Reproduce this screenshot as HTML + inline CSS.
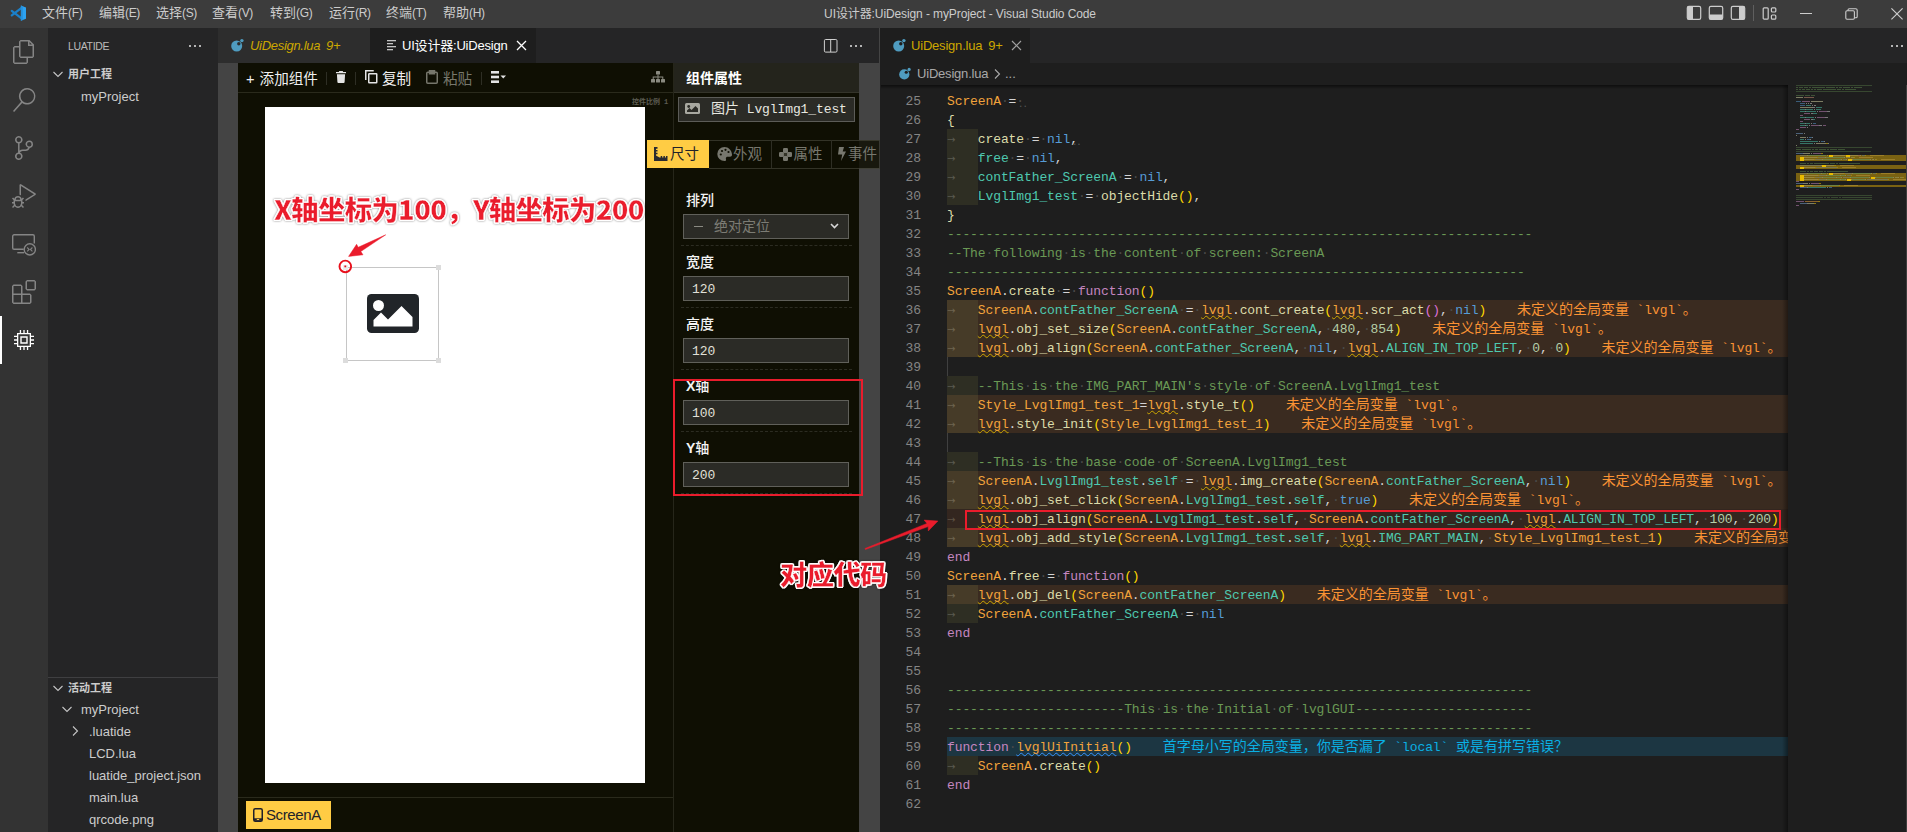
<!DOCTYPE html><html lang="zh"><head><meta charset="utf-8"><title>UI设计器:UiDesign - myProject - Visual Studio Code</title><style>
*{box-sizing:border-box;margin:0;padding:0}
html,body{width:1907px;height:832px;overflow:hidden;background:#1e1e1e}
body{font-family:"Liberation Sans","Noto Sans CJK SC",sans-serif;font-size:13px;color:#cccccc;position:relative}
.abs{position:absolute}
#title{position:absolute;left:0;top:0;width:1907px;height:28px;background:#3c3c3c}
#title .menu{position:absolute;top:-1px;height:28px;line-height:28px;font-size:13px;color:#cccccc;white-space:nowrap}
#title .ttl{position:absolute;left:0;width:1920px;top:0;height:28px;line-height:27px;text-align:center;font-size:12.5px;color:#cccccc}
#act{position:absolute;left:0;top:28px;width:48px;height:804px;background:#333333}
#act svg{position:absolute;left:12px;width:24px;height:24px;fill:#858585}
#side{position:absolute;left:48px;top:28px;width:170px;height:804px;background:#252526}
#side .t{position:absolute;white-space:nowrap;color:#cccccc;font-size:13px;line-height:22px;height:22px}
#side .h{position:absolute;white-space:nowrap;color:#cccccc;font-size:11px;font-weight:bold;line-height:22px;height:22px}
#side svg{position:absolute;width:16px;height:16px;fill:none;stroke:#c5c5c5;stroke-width:1.1}
#g1tabs{position:absolute;left:218px;top:28px;width:662px;height:35px;background:#252526}
#g2tabs{position:absolute;left:881px;top:28px;width:1026px;height:35px;background:#252526}
.tab{position:absolute;top:0;height:35px;line-height:35px;font-size:13px;white-space:nowrap}
#crumb{position:absolute;left:881px;top:63px;width:1026px;height:22px;background:#1e1e1e;line-height:22px;font-size:13px;color:#a9a9a9}
#ed{position:absolute;left:881px;top:85px;width:1026px;height:747px;background:#1e1e1e;overflow:hidden}
#edin{position:absolute;left:-881px;top:-85px;width:1907px;height:832px;font-family:"Liberation Mono","Noto Sans CJK SC",monospace;font-size:13px;letter-spacing:-0.1px}
.num{position:absolute;left:881px;width:40px;text-align:right;height:19px;line-height:21px;color:#858585}

.cl{position:absolute;height:19px;line-height:21px;white-space:pre;color:#d4d4d4}
.cl span,.cl i{display:inline-block;height:19px;vertical-align:top}
.cl i.sp{font-style:normal;color:#4b4b4b;width:7.7px}
.cl i.tr{font-style:normal;color:#5a5a5a;font-size:9px;letter-spacing:-1px;position:relative;top:4px;left:-6px}
.wbg{position:absolute;left:947px;width:841px;height:19px;background:#3a2b20}
.wbg.w47{background:#33261f}
.hbg{position:absolute;left:947px;width:841px;height:19px;background:#1c3642}
.ind{position:absolute;left:947px;width:31px;height:19px;background:#2e2e23;line-height:19px;color:#5a5a50}
.ind.indw{background:#463b28;color:#6e6450}
.ind.ind47{background:#33261f;color:#5e5244}
.ind .arr{position:absolute;left:0px;top:1px;font-family:"DejaVu Sans",sans-serif;font-size:10px;letter-spacing:0}
.guide{position:absolute;left:947px;width:1px;height:19px;background:#404040}
.wmsg{color:#fb9334;margin-left:30.8px}
.wmsg b,.hmsg b{font-weight:normal;font-size:14px;letter-spacing:0;display:inline-block;height:19px;vertical-align:top}
.hmsg{color:#0ab0e4;margin-left:30.8px}
.g{color:#f2a33c}.f{color:#dcdcaa}.p{color:#4ec9b0}.k{color:#c586c0}.c{color:#569cd6}.n{color:#b5cea8}.m{color:#6a9955}.o{color:#d4d4d4}.y{color:#ffd700}.r{color:#da70d6}
.sq{text-decoration:underline wavy #cca700;text-decoration-thickness:1px;text-underline-offset:1px;text-decoration-skip-ink:none}
.sqb{text-decoration:underline wavy #3794ff;text-decoration-thickness:1px;text-underline-offset:1px;text-decoration-skip-ink:none}
.tb{position:absolute;top:0;height:29px;line-height:32px;font-size:14.600px;font-weight:400;color:#f0f0f0;white-space:nowrap}
.vsep{margin-left:1px;top:9px;width:1px;height:13px;background:#2e2e24}
.hd{width:5px;height:5px;background:#dcdcdc}
.ptab{position:absolute;top:77px;height:28px;line-height:29px;font-size:14.500px;color:#77776e;white-space:nowrap}
.plab{position:absolute;left:468px;margin-top:-1.500px;height:22px;line-height:22px;font-size:14px;font-weight:500;color:#f4f4f4;white-space:nowrap}
.pinp{position:absolute;left:465px;width:166px;height:25px;background:#2b2b26;border:1px solid #60605a}
.pval{position:absolute;left:474px;margin-top:2px;height:24px;line-height:24px;font-size:13px;letter-spacing:-.1px;color:#e0e0d8;font-family:"Liberation Mono",monospace}
.psep{position:absolute;left:463px;width:171px;height:0;border-top:1px dashed #2c2c22}
.ann{position:absolute;white-space:nowrap;font-family:"Noto Sans CJK SC","Liberation Sans",sans-serif;font-weight:900;color:#ea1c2c;-webkit-text-stroke:.4px #ffffff;text-shadow:1.300px 0 #fff,-1.300px 0 #fff,0 1.300px #fff,0 -1.300px #fff,.95px .95px #fff,-.95px .95px #fff,.95px -.95px #fff,-.95px -.95px #fff;filter:drop-shadow(0 0 1.200px rgba(0,0,0,.45))}

.mp{font-size:12px;letter-spacing:-.35px}
#side .t{margin-top:1px}
.dots{position:absolute;width:14px;height:2px}.dots i{position:absolute;top:0;width:2px;height:2px;background:#b4b4b4}.dots i:nth-child(1){left:0}.dots i:nth-child(2){left:5px}.dots i:nth-child(3){left:10px}
</style></head><body>
<div id="title">
 <svg class="abs" style="left:10.300px;top:4.600px;width:16px;height:16.300px" viewBox="0 0 100 100"><path d="M72 17L11 64M72 83L11 36" stroke="#1b80c9" stroke-width="14" stroke-linecap="round" fill="none"/><path d="M68 2l32 13v70L68 98z" fill="#2da2f1"/><path d="M68 2l12 5v86l-12 5z" fill="#2591dd"/></svg>
 <div class="menu" style="left:42px">文件<span class="mp">(F)</span></div>
 <div class="menu" style="left:99px">编辑<span class="mp">(E)</span></div>
 <div class="menu" style="left:156px">选择<span class="mp">(S)</span></div>
 <div class="menu" style="left:212px">查看<span class="mp">(V)</span></div>
 <div class="menu" style="left:270px">转到<span class="mp">(G)</span></div>
 <div class="menu" style="left:329px">运行<span class="mp">(R)</span></div>
 <div class="menu" style="left:386px">终端<span class="mp">(T)</span></div>
 <div class="menu" style="left:443px">帮助<span class="mp">(H)</span></div>
 <div class="ttl" style="font-size:12px;letter-spacing:-.1px;line-height:29px">UI设计器:UiDesign - myProject - Visual Studio Code</div>
 <!-- layout controls -->
 <svg class="abs" style="left:1686px;top:5px;width:16px;height:16px" viewBox="0 0 16 16"><rect x="1.300" y="1.400" width="13.400" height="13" rx="1.600" fill="none" stroke="#cccccc" stroke-width="1.200"/><path d="M1.300 2.500a1.200 1.200 0 0 1 1.200-1.200H7v13.200H2.500a1.200 1.200 0 0 1-1.200-1.200z" fill="#cccccc"/></svg>
 <svg class="abs" style="left:1708px;top:5px;width:16px;height:16px" viewBox="0 0 16 16"><rect x="1.300" y="1.400" width="13.400" height="13" rx="1.600" fill="none" stroke="#cccccc" stroke-width="1.200"/><path d="M1.300 9.500h13.400v3.800a1.200 1.200 0 0 1-1.200 1.200H2.500a1.200 1.200 0 0 1-1.200-1.200z" fill="#cccccc"/></svg>
 <svg class="abs" style="left:1730px;top:5px;width:16px;height:16px" viewBox="0 0 16 16"><rect x="1.300" y="1.400" width="13.400" height="13" rx="1.600" fill="none" stroke="#cccccc" stroke-width="1.200"/><path d="M9 1.300h4.500a1.200 1.200 0 0 1 1.200 1.200v10.800a1.200 1.200 0 0 1-1.200 1.200H9z" fill="#cccccc"/></svg>
 <div class="abs" style="left:1753px;top:5px;width:1px;height:16px;background:#5f5f5f"></div>
 <svg class="abs" style="left:1762px;top:6px;width:15px;height:15px" viewBox="0 0 15 15" fill="none" stroke="#cccccc" stroke-width="1.200"><rect x="1.200" y="1.800" width="5" height="11.400" rx="1"/><rect x="9.400" y="1.800" width="4.400" height="4.200" rx="1"/><rect x="9.400" y="9" width="4.400" height="4.200" rx="1"/></svg>
 <div class="abs" style="left:1799.500px;top:12.800px;width:12px;height:1.100px;background:#cccccc"></div>
 <svg class="abs" style="left:1845px;top:7.500px;width:13px;height:12px" viewBox="0 0 13 12" fill="none" stroke="#cccccc" stroke-width="1.100"><rect x=".8" y="2.800" width="8.600" height="8.400" rx="1.200"/><path d="M3 2.800V2a1.300 1.300 0 0 1 1.300-1.300h6.400A1.500 1.500 0 0 1 12.200 2.200v6.200a1.300 1.300 0 0 1-1.300 1.300h-1.300"/></svg>
 <svg class="abs" style="left:1891px;top:7.500px;width:12px;height:12px" viewBox="0 0 12 12" fill="none" stroke="#cccccc" stroke-width="1.200"><path d="M.4 .4l11.200 11M11.600 .4L.4 11.400"/></svg>
</div>

<div id="act">
 <svg style="top:12px" viewBox="0 0 24 24"><path d="M17.5 0h-9L7 1.5V6H2.5L1 7.5v15.07L2.5 24h12.07L16 22.57V18h4.7l1.3-1.43V4.5L17.5 0zm0 2.12l2.38 2.38H17.5V2.12zm-3 20.38h-12v-15H7v9.07L8.5 18h6v4.5zm6-6h-12v-15H16V6h4.5v10.5z"/></svg>
 <svg style="top:60px" viewBox="0 0 24 24"><path d="M15.25 0a8.25 8.25 0 0 0-6.18 13.72L1 22.88l1.12 1.12 8.05-9.12A8.251 8.251 0 1 0 15.25.01V0zm0 15a6.75 6.75 0 1 1 0-13.5 6.75 6.75 0 0 1 0 13.5z"/></svg>
 <svg style="top:108px" viewBox="0 0 24 24"><path d="M21.007 8.222A3.738 3.738 0 0 0 15.045 5.2a3.737 3.737 0 0 0 1.156 6.583 2.988 2.988 0 0 1-2.668 1.67h-2.99a4.456 4.456 0 0 0-2.989 1.165V7.4a3.737 3.737 0 1 0-1.494 0v9.117a3.776 3.776 0 1 0 1.816.099 2.99 2.99 0 0 1 2.668-1.667h2.99a4.484 4.484 0 0 0 4.223-3.039 3.736 3.736 0 0 0 3.25-3.687zM4.565 3.738a2.242 2.242 0 1 1 4.484 0 2.242 2.242 0 0 1-4.484 0zm4.484 16.441a2.242 2.242 0 1 1-4.484 0 2.242 2.242 0 0 1 4.484 0zm8.221-9.715a2.242 2.242 0 1 1 0-4.485 2.242 2.242 0 0 1 0 4.485z"/></svg>
 <svg style="top:156px" viewBox="0 0 24 24"><path d="M10.94 13.5l-1.32 1.32a3.73 3.73 0 0 0-7.24 0L1.06 13.5 0 14.56l1.72 1.72-.22.22V18H0v1.5h1.5v.08c.077.489.214.966.41 1.42L0 22.94 1.06 24l1.65-1.65A4.308 4.308 0 0 0 6 24a4.31 4.31 0 0 0 3.29-1.65L10.94 24 12 22.94 10.09 21c.198-.464.336-.951.41-1.45v-.1H12V18h-1.5v-1.5l-.22-.22L12 14.56l-1.06-1.06zM6 13.5a2.25 2.25 0 0 1 2.25 2.25h-4.5A2.25 2.25 0 0 1 6 13.5zm3 6a3.33 3.33 0 0 1-3 3 3.33 3.33 0 0 1-3-3v-2.25h6v2.25zm14.76-9.9v1.26L13.5 17.37V15.6l8.5-5.37L9 2v9.46a5.07 5.07 0 0 0-1.5-.72V.63L8.64 0l15.12 9.6z"/></svg>
 <svg style="top:204px;fill:none;stroke:#858585;stroke-width:1.400" viewBox="0 0 24 24"><path d="M22.300 11.500V4.200a1.400 1.400 0 0 0-1.400-1.400H2.100A1.400 1.400 0 0 0 .7 4.200v11.700a1.400 1.400 0 0 0 1.400 1.400h9.600"/><path d="M5.300 20.700h6.700"/><circle cx="17.800" cy="17.400" r="5.600"/><path d="M15.200 15.500l1.900 1.900-1.900 1.900M20.400 15.500l-1.900 1.900 1.900 1.900" stroke-width="1.100"/></svg>
 <svg style="top:252px" viewBox="0 0 24 24"><path d="M13.5 1.5L15 0h7.5L24 1.500V9l-1.500 1.500H15L13.500 9V1.500zm1.500 0V9h7.500V1.500H15zM0 15V6l1.500-1.500H9L10.500 6v7.500H18l1.500 1.500v7.500L18 24H1.500L0 22.500V15zm9-1.500V6H1.500v7.500H9zM9 15H1.500v7.500H9V15zm1.500 7.500H18V15h-7.500v7.500z"/></svg>
 <div class="abs" style="left:0;top:288px;width:2px;height:48px;background:#ffffff"></div>
 <svg style="left:14px;top:302px;width:20px;height:20px;fill:#ffffff" viewBox="0 0 20 20"><path fill-rule="evenodd" d="M3 3h14v14H3zM4.300 4.300v11.400h11.400V4.300zM6.300 6.300h7.400v7.400H6.300zM7.700 7.700v4.600h4.600V7.700z"/><path d="M5.800 0h1.300v3H5.800zM9.350 0h1.300v3h-1.300zM12.900 0h1.300v3h-1.300zM5.800 17h1.300v3H5.800zM9.350 17h1.300v3h-1.300zM12.900 17h1.300v3h-1.300zM0 5.800h3v1.300H0zM0 9.350h3v1.300H0zM0 12.900h3v1.300H0zM17 5.800h3v1.300h-3zM17 9.350h3v1.300h-3zM17 12.900h3v1.300h-3z"/></svg>
</div>

<div id="side">
 <div class="abs" style="left:20px;top:7px;font-size:10.500px;line-height:22px;color:#bbbbbb;letter-spacing:-.35px">LUATIDE</div>
 <div class="dots" style="left:141px;top:17px"><i></i><i></i><i></i></div>
 <svg style="left:2px;top:38px" viewBox="0 0 16 16"><path d="M3.500 6l4.500 4.500 4.500-4.500"/></svg>
 <div class="h" style="left:20px;top:35px">用户工程</div>
 <div class="t" style="left:33px;top:57px">myProject</div>
 <div class="abs" style="left:0;top:649px;width:170px;height:1px;background:#3f3f41"></div>
 <svg style="left:2px;top:652px" viewBox="0 0 16 16"><path d="M3.500 6l4.500 4.500 4.500-4.500"/></svg>
 <div class="h" style="left:20px;top:649px">活动工程</div>
 <svg style="left:11px;top:673px" viewBox="0 0 16 16"><path d="M3.500 6l4.500 4.500 4.500-4.500"/></svg>
 <div class="t" style="left:33px;top:670px">myProject</div>
 <svg style="left:19px;top:695px" viewBox="0 0 16 16"><path d="M6 3.500l4.500 4.500-4.500 4.500"/></svg>
 <div class="t" style="left:41px;top:692px">.luatide</div>
 <div class="t" style="left:41px;top:714px">LCD.lua</div>
 <div class="t" style="left:41px;top:736px">luatide_project.json</div>
 <div class="t" style="left:41px;top:758px">main.lua</div>
 <div class="t" style="left:41px;top:780px">qrcode.png</div>
</div>

<div id="g1tabs">
 <div class="tab" style="left:0;width:152px;background:#2d2d2d"></div>
 <svg class="abs" style="left:13.2px;top:9.6px;width:14px;height:14px" viewBox="0 0 14 14"><circle cx="5.700" cy="8" r="5.500" fill="#4f9cc0"/><circle cx="10.900" cy="2.600" r="1.700" fill="#4f9cc0"/><circle cx="7.800" cy="5.700" r="1.700" fill="#2d2d2d"/></svg>
 <div class="tab" style="left:32px;color:#cca700;font-style:italic;letter-spacing:-.3px">UiDesign.lua<span style="margin-left:6px;font-size:13px">9+</span></div>
 <div class="tab" style="left:152px;width:166px;background:#1e1e1e"></div>
 <svg class="abs" style="left:169px;top:11px;width:12px;height:12px" viewBox="0 0 12 12" fill="#c5c5c5"><rect x="0" y="1" width="9" height="1.300"/><rect x="0" y="4" width="6" height="1.300"/><rect x="0" y="7" width="9" height="1.300"/><rect x="0" y="10" width="6" height="1.300"/></svg>
 <div class="tab" style="left:184px;color:#ffffff;letter-spacing:-.2px">UI设计器:UiDesign</div>
 <svg class="abs" style="left:298px;top:12px;width:11px;height:11px" viewBox="0 0 11 11" fill="none" stroke="#ffffff" stroke-width="1.300"><path d="M1 1l9 9M10 1l-9 9"/></svg>
 <svg class="abs" style="left:605px;top:10px;width:16px;height:16px" viewBox="0 0 16 16" fill="none" stroke="#d0d0d0"><rect x="1.400" y="1.500" width="12.600" height="12.600" rx="1.200"/><path d="M7.700 1.500v12.600"/></svg>
 <div class="dots" style="left:632px;top:17px"><i></i><i></i><i></i></div>
</div>
<div class="abs" style="left:879px;top:28px;width:1px;height:804px;background:#444444"></div><div class="abs" style="left:880px;top:28px;width:1px;height:804px;background:#1e1e1e"></div>
<div id="g2tabs">
 <div class="tab" style="left:0;width:149px;background:#1e1e1e"></div>
 <svg class="abs" style="left:11.7px;top:9.6px;width:14px;height:14px" viewBox="0 0 14 14"><circle cx="5.700" cy="8" r="5.500" fill="#4f9cc0"/><circle cx="10.900" cy="2.600" r="1.700" fill="#4f9cc0"/><circle cx="7.800" cy="5.700" r="1.700" fill="#1e1e1e"/></svg>
 <div class="tab" style="left:30px;color:#cca700;letter-spacing:-.2px">UiDesign.lua<span style="margin-left:6px">9+</span></div>
 <svg class="abs" style="left:130px;top:12px;width:11px;height:11px" viewBox="0 0 11 11" fill="none" stroke="#a0a0a0" stroke-width="1.200"><path d="M1 1l9 9M10 1l-9 9"/></svg>
 <div class="dots" style="left:1010px;top:17px"><i></i><i></i><i></i></div>
</div>
<div id="crumb">
 <svg class="abs" style="left:17.6px;top:4.0px;width:13px;height:13px" viewBox="0 0 14 14"><circle cx="5.700" cy="8" r="5.500" fill="#4f9cc0"/><circle cx="10.900" cy="2.600" r="1.700" fill="#4f9cc0"/><circle cx="7.800" cy="5.700" r="1.700" fill="#1e1e1e"/></svg>
 <div class="abs" style="left:36px;top:0;letter-spacing:-.2px">UiDesign.lua</div>
 <svg class="abs" style="left:108px;top:3px;width:16px;height:16px" viewBox="0 0 16 16" fill="none" stroke="#a9a9a9" stroke-width="1.100"><path d="M6 3.500l4.500 4.500-4.500 4.500"/></svg>
 <div class="abs" style="left:124px;top:0">...</div>
</div>

<div id="dz" class="abs" style="left:218px;top:63px;width:662px;height:769px;background:#444444;overflow:hidden">
 <div class="abs" style="left:20px;top:0;width:621px;height:769px;background:#0f0f03"></div>
 <!-- toolbar -->
 <div class="abs" style="left:20px;top:29px;width:436px;height:1px;background:#2a2a1c"></div>
 <div class="tb" style="left:28px">+<span style="margin-left:1px"> 添加组件</span></div>
 <div class="abs vsep" style="left:107px"></div>
 <svg class="abs" style="left:118px;top:8px;width:10px;height:12px" viewBox="0 0 10 12" fill="#e4e4e4"><path d="M3.300 0h3.400l.5 1H10v1.300H0V1h2.800zM.9 3.200h8.200L8.600 11a1 1 0 0 1-1 1H2.400a1 1 0 0 1-1-1z"/></svg>
 <div class="abs vsep" style="left:136px"></div>
 <svg class="abs" style="left:147px;top:7px;width:13px;height:14px" viewBox="0 0 13 14" fill="none" stroke="#e4e4e4" stroke-width="1.500"><rect x="3.750" y="3.750" width="8" height="9" rx=".5"/><path d="M.75 10V.75h8"/></svg>
 <div class="tb" style="left:164px">复制</div>
 <svg class="abs" style="left:208px;top:7px;width:12px;height:14px" viewBox="0 0 12 14" fill="none" stroke="#77776c" stroke-width="1.500"><rect x=".75" y="2.250" width="10.500" height="11" rx="1"/><rect x="3.500" y=".75" width="5" height="3" fill="#77776c"/></svg>
 <div class="tb" style="left:225px;color:#77776c">粘贴</div>
 <div class="abs vsep" style="left:262px"></div>
 <svg class="abs" style="left:273px;top:8px;width:16px;height:12px" viewBox="0 0 16 12" fill="#e4e4e4"><rect x="0" y="0" width="8" height="2.600"/><rect x="0" y="4.700" width="8" height="2.600"/><rect x="0" y="9.400" width="8" height="2.600"/><path d="M9.500 4.500h5.500l-2.750 3z"/></svg>
 <svg class="abs" style="left:433px;top:8px;width:14px;height:12px" viewBox="0 0 14 12" fill="#8a8a80"><rect x="5" y="0" width="4" height="3.500" rx=".5"/><rect x="0" y="8" width="4" height="3.500" rx=".5"/><rect x="5" y="8" width="4" height="3.500" rx=".5"/><rect x="10" y="8" width="4" height="3.500" rx=".5"/><path d="M6.500 3.500h1v2h4.800v2.500h-1V6.500H7.500V8h-1V6.500H2.700V8h-1V5.500h4.800z"/></svg>
 <div class="abs" style="left:414px;top:33px;font-size:7px;line-height:11px;color:#5c5c52;white-space:nowrap;font-weight:bold">控件比例<span style="font-family:'Liberation Mono',monospace;margin-left:4px">1</span></div>
 <!-- canvas -->
 <div class="abs" style="left:47px;top:44px;width:380px;height:676px;background:#ffffff"></div>
 <!-- widget -->
 <div class="abs" style="left:128px;top:204px;width:93px;height:94px;border:1px solid #c6c6c6"></div>
 <div class="abs hd" style="left:125px;top:202px;background:#ececec"></div><div class="abs hd" style="left:218px;top:202px"></div>
 <div class="abs hd" style="left:125px;top:295px"></div><div class="abs hd" style="left:218px;top:295px"></div>
 <svg class="abs" style="left:149px;top:231px;width:52px;height:39px" viewBox="0 0 52 39"><rect width="52" height="39" rx="4.500" fill="#212529"/><circle cx="11.500" cy="11.500" r="5.500" fill="#fff"/><path d="M6.500 32.500v-6.500l7.500-7.500 7 7 13.500-13.500 11 11v9.500z" fill="#fff"/></svg>
 <!-- separator bottom -->
 <div class="abs" style="left:20px;top:734px;width:436px;height:1px;background:#2a2a1c"></div>
 <div class="abs" style="left:28px;top:738px;width:85px;height:28px;background:#ffcc44"></div>
 <svg class="abs" style="left:35px;top:745px;width:10px;height:14px" viewBox="0 0 10 14"><rect x=".75" y=".75" width="8.500" height="12.500" rx="1.500" fill="none" stroke="#20202a" stroke-width="1.500"/><rect x="1" y="10.300" width="8" height="2.500" fill="#20202a"/><rect x="3.800" y="11" width="2.400" height="1" fill="#ffcc44"/></svg>
 <div class="abs" style="left:48px;top:738px;height:28px;line-height:27px;font-size:15px;letter-spacing:-.4px;color:#22222a">ScreenA</div>
 <!-- divider between canvas & props -->
 <div class="abs" style="left:455px;top:0;width:1px;height:769px;background:#26261a"></div>
 <!-- properties panel -->
 <div class="abs" style="left:456px;top:0;width:185px;height:29px;background:#24241c"></div>
 <div class="abs" style="left:456px;top:29px;width:185px;height:1px;background:#34342a"></div>
 <div class="abs" style="left:468px;top:0;height:30px;line-height:30px;font-size:14px;font-weight:bold;color:#ffffff">组件属性</div>
 <div class="abs" style="left:460px;top:34px;width:177px;height:25px;background:#2b2b26;border:1px solid #5c5c58"></div>
 <svg class="abs" style="left:467px;top:40px;width:15px;height:11px" viewBox="0 0 15 11"><rect width="15" height="11" rx="1.500" fill="#a8a8a0"/><circle cx="3.700" cy="3.500" r="1.400" fill="#2b2b26"/><path d="M2 9v-1.500l2.500-2.500 2 2 4-4 2.500 2.500v3.500z" fill="#2b2b26"/></svg>
 <div class="abs" style="left:493px;top:34px;height:25px;line-height:25px;font-size:13px;color:#e8e8e0;font-family:'Liberation Mono','Noto Sans CJK SC',monospace;white-space:nowrap;letter-spacing:-.1px"><span style="font-size:14px;letter-spacing:0">图片</span> LvglImg1_test</div>
 <!-- tabs -->
 <div class="abs" style="left:429px;top:77px;width:62px;height:28px;background:#ffcc44"></div>
 <div class="abs" style="left:491px;top:77px;width:171px;height:28px;background:rgba(15,15,3,.82)"></div>
 <div class="abs" style="left:491px;top:77px;width:171px;height:1px;background:rgba(64,64,52,.75)"></div><div class="abs" style="left:491px;top:105px;width:171px;height:1px;background:rgba(64,64,52,.75)"></div>
 <div class="abs" style="left:553px;top:77px;width:1px;height:28px;background:#2e2e24"></div>
 <div class="abs" style="left:613px;top:77px;width:1px;height:28px;background:#2e2e24"></div>
 <div class="abs" style="left:661px;top:77px;width:1px;height:28px;background:#3a3a34"></div>
 <svg class="abs" style="left:436px;top:84px;width:14px;height:14px" viewBox="0 0 14 14" fill="#2a2a30"><path d="M0 0h3.500v1.800h-1.500v1.200h1.500v1.500h-1.500v1.200h1.500v1.500h-1.500v1.300l3.500 2h1.200v-1.500h1.500v1.500h1.200v-1.500h1.500v1.500h1.100v-1.500h1.500v5H0z"/></svg>
 <div class="ptab" style="left:452px;color:#22222a">尺寸</div>
 <svg class="abs" style="left:499px;top:84px;width:15px;height:14px" viewBox="0 0 15 14"><path d="M7.500 0a7.200 7 0 1 0 0 14c1.300 0 1.800-.9 1.500-1.800-.5-1.400.3-2.500 1.700-2.500h2.300a2 2 0 0 0 2-2.200c-.2-4.200-3.600-7.500-7.500-7.500z" fill="#77776e"/><circle cx="3.800" cy="7.500" r="1.100" fill="#0f0f03"/><circle cx="5" cy="4" r="1.100" fill="#0f0f03"/><circle cx="8.500" cy="2.800" r="1.100" fill="#0f0f03"/><circle cx="11.500" cy="5" r="1.100" fill="#0f0f03"/></svg>
 <div class="ptab" style="left:515px">外观</div>
 <svg class="abs" style="left:561px;top:85px;width:13px;height:13px" viewBox="0 0 13 13" fill="#77776e"><rect x="4" y="0" width="5" height="4.900" rx="1.200"/><rect x="4" y="8.100" width="5" height="4.900" rx="1.200"/><rect x="0" y="4" width="4.900" height="5" rx="1.200"/><rect x="8.100" y="4" width="4.900" height="5" rx="1.200"/><path d="M4 4h5v5H4z" opacity=".35"/></svg>
 <div class="ptab" style="left:575.500px">属性</div>
 <svg class="abs" style="left:620px;top:84px;width:8px;height:14px" viewBox="0 0 8 14" fill="#77776e"><path d="M1 0h5l-1.300 4.500h3.300l-5 9.500 1.200-6.500H0z"/></svg>
 <div class="ptab" style="left:630px">事件</div>
 <!-- fields -->
 <div class="plab" style="top:127px">排列</div>
 <div class="pinp" style="top:151px"></div>
 <div class="abs" style="left:476px;top:163px;width:9px;height:1px;background:#8a8a82"></div><div class="abs" style="left:496px;top:151px;height:24px;line-height:25px;font-size:14px;color:#7c7c74;white-space:nowrap">绝对定位</div>
 <svg class="abs" style="left:612px;top:160px;width:9px;height:6px" viewBox="0 0 9 6" fill="none" stroke="#d8d8d8" stroke-width="1.600"><path d="M1 1l3.500 3.500L8 1"/></svg>
 <div class="psep" style="top:182px"></div>
 <div class="plab" style="top:189px">宽度</div>
 <div class="pinp" style="top:213px"></div><div class="pval" style="top:213px">120</div>
 <div class="psep" style="top:244px"></div>
 <div class="plab" style="top:251px">高度</div>
 <div class="pinp" style="top:275px"></div><div class="pval" style="top:275px">120</div>
 <div class="psep" style="top:306px"></div>
 <div class="plab" style="top:313px"><b>X</b>轴</div>
 <div class="pinp" style="top:337px"></div><div class="pval" style="top:337px">100</div>
 <div class="psep" style="top:368px"></div>
 <div class="plab" style="top:375px"><b>Y</b>轴</div>
 <div class="pinp" style="top:399px"></div><div class="pval" style="top:399px">200</div>
 <div class="psep" style="top:430px"></div>
</div>

<div id="ed"><div id="edin"><div class="ind" style="top:129px"><span class="arr">→</span></div>
<div class="ind" style="top:148px"><span class="arr">→</span></div>
<div class="ind" style="top:167px"><span class="arr">→</span></div>
<div class="ind" style="top:186px"><span class="arr">→</span></div>
<div class="wbg" style="top:300px"></div>
<div class="ind indw" style="top:300px"><span class="arr">→</span></div>
<div class="wbg" style="top:319px"></div>
<div class="ind indw" style="top:319px"><span class="arr">→</span></div>
<div class="wbg" style="top:338px"></div>
<div class="ind indw" style="top:338px"><span class="arr">→</span></div>
<div class="guide" style="top:357px"></div>
<div class="ind" style="top:376px"><span class="arr">→</span></div>
<div class="wbg" style="top:395px"></div>
<div class="ind indw" style="top:395px"><span class="arr">→</span></div>
<div class="wbg" style="top:414px"></div>
<div class="ind indw" style="top:414px"><span class="arr">→</span></div>
<div class="guide" style="top:433px"></div>
<div class="ind" style="top:452px"><span class="arr">→</span></div>
<div class="wbg" style="top:471px"></div>
<div class="ind indw" style="top:471px"><span class="arr">→</span></div>
<div class="wbg" style="top:490px"></div>
<div class="ind indw" style="top:490px"><span class="arr">→</span></div>
<div class="wbg w47" style="top:509px"></div>
<div class="ind ind47" style="top:509px"><span class="arr">→</span></div>
<div class="wbg" style="top:528px"></div>
<div class="ind indw" style="top:528px"><span class="arr">→</span></div>
<div class="wbg" style="top:585px"></div>
<div class="ind indw" style="top:585px"><span class="arr">→</span></div>
<div class="ind" style="top:604px"><span class="arr">→</span></div>
<div class="hbg" style="top:737px"></div>
<div class="ind" style="top:756px"><span class="arr">→</span></div>
<div class="num" style="top:91px">25</div>
<div class="cl" style="top:91px;left:947.0px"><span class="g">ScreenA</span><i class="sp">·</i><span class="o">=</span><i class="sp">·</i><i class="tr">..</i></div>
<div class="num" style="top:110px">26</div>
<div class="cl" style="top:110px;left:947.0px"><span class="f">{</span></div>
<div class="num" style="top:129px">27</div>
<div class="cl" style="top:129px;left:977.8px"><span class="f">create</span><i class="sp">·</i><span class="o">=</span><i class="sp">·</i><span class="c">nil</span><span class="o">,</span><i class="tr">..</i></div>
<div class="num" style="top:148px">28</div>
<div class="cl" style="top:148px;left:977.8px"><span class="p">free</span><i class="sp">·</i><span class="o">=</span><i class="sp">·</i><span class="c">nil</span><span class="o">,</span></div>
<div class="num" style="top:167px">29</div>
<div class="cl" style="top:167px;left:977.8px"><span class="p">contFather_ScreenA</span><i class="sp">·</i><span class="o">=</span><i class="sp">·</i><span class="c">nil</span><span class="o">,</span></div>
<div class="num" style="top:186px">30</div>
<div class="cl" style="top:186px;left:977.8px"><span class="p">LvglImg1_test</span><i class="sp">·</i><span class="o">=</span><i class="sp">·</i><span class="f">objectHide</span><span class="y">()</span><span class="o">,</span></div>
<div class="num" style="top:205px">31</div>
<div class="cl" style="top:205px;left:947.0px"><span class="f">}</span></div>
<div class="num" style="top:224px">32</div>
<div class="cl" style="top:224px;left:947.0px"><span class="m">----------------------------------------------------------------------------</span></div>
<div class="num" style="top:243px">33</div>
<div class="cl" style="top:243px;left:947.0px"><span class="m">--The</span><i class="sp">·</i><span class="m">following</span><i class="sp">·</i><span class="m">is</span><i class="sp">·</i><span class="m">the</span><i class="sp">·</i><span class="m">content</span><i class="sp">·</i><span class="m">of</span><i class="sp">·</i><span class="m">screen:</span><i class="sp">·</i><span class="m">ScreenA</span></div>
<div class="num" style="top:262px">34</div>
<div class="cl" style="top:262px;left:947.0px"><span class="m">---------------------------------------------------------------------------</span></div>
<div class="num" style="top:281px">35</div>
<div class="cl" style="top:281px;left:947.0px"><span class="g">ScreenA</span><span class="o">.</span><span class="f">create</span><i class="sp">·</i><span class="o">=</span><i class="sp">·</i><span class="k">function</span><span class="y">()</span></div>
<div class="num" style="top:300px">36</div>
<div class="cl" style="top:300px;left:977.8px"><span class="g">ScreenA</span><span class="o">.</span><span class="p">contFather_ScreenA</span><i class="sp">·</i><span class="o">=</span><i class="sp">·</i><span class="g sq">lvgl</span><span class="o">.</span><span class="f">cont_create</span><span class="y">(</span><span class="g sq">lvgl</span><span class="o">.</span><span class="f">scr_act</span><span class="r">()</span><span class="o">,</span><i class="sp">·</i><span class="c">nil</span><span class="y">)</span><span class="wmsg"><b>未定义的全局变量</b> `lvgl`<b>。</b></span></div>
<div class="num" style="top:319px">37</div>
<div class="cl" style="top:319px;left:977.8px"><span class="g sq">lvgl</span><span class="o">.</span><span class="f">obj_set_size</span><span class="y">(</span><span class="g">ScreenA</span><span class="o">.</span><span class="p">contFather_ScreenA</span><span class="o">,</span><i class="sp">·</i><span class="n">480</span><span class="o">,</span><i class="sp">·</i><span class="n">854</span><span class="y">)</span><span class="wmsg"><b>未定义的全局变量</b> `lvgl`<b>。</b></span></div>
<div class="num" style="top:338px">38</div>
<div class="cl" style="top:338px;left:977.8px"><span class="g sq">lvgl</span><span class="o">.</span><span class="f">obj_align</span><span class="y">(</span><span class="g">ScreenA</span><span class="o">.</span><span class="p">contFather_ScreenA</span><span class="o">,</span><i class="sp">·</i><span class="c">nil</span><span class="o">,</span><i class="sp">·</i><span class="g sq">lvgl</span><span class="o">.</span><span class="p">ALIGN_IN_TOP_LEFT</span><span class="o">,</span><i class="sp">·</i><span class="n">0</span><span class="o">,</span><i class="sp">·</i><span class="n">0</span><span class="y">)</span><span class="wmsg"><b>未定义的全局变量</b> `lvgl`<b>。</b></span></div>
<div class="num" style="top:357px">39</div>
<div class="cl" style="top:357px;left:947.0px"></div>
<div class="num" style="top:376px">40</div>
<div class="cl" style="top:376px;left:977.8px"><span class="m">--This</span><i class="sp">·</i><span class="m">is</span><i class="sp">·</i><span class="m">the</span><i class="sp">·</i><span class="m">IMG_PART_MAIN's</span><i class="sp">·</i><span class="m">style</span><i class="sp">·</i><span class="m">of</span><i class="sp">·</i><span class="m">ScreenA.LvglImg1_test</span></div>
<div class="num" style="top:395px">41</div>
<div class="cl" style="top:395px;left:977.8px"><span class="g">Style_LvglImg1_test_1</span><span class="o">=</span><span class="g sq">lvgl</span><span class="o">.</span><span class="f">style_t</span><span class="y">()</span><span class="wmsg"><b>未定义的全局变量</b> `lvgl`<b>。</b></span></div>
<div class="num" style="top:414px">42</div>
<div class="cl" style="top:414px;left:977.8px"><span class="g sq">lvgl</span><span class="o">.</span><span class="f">style_init</span><span class="y">(</span><span class="g">Style_LvglImg1_test_1</span><span class="y">)</span><span class="wmsg"><b>未定义的全局变量</b> `lvgl`<b>。</b></span></div>
<div class="num" style="top:433px">43</div>
<div class="cl" style="top:433px;left:947.0px"></div>
<div class="num" style="top:452px">44</div>
<div class="cl" style="top:452px;left:977.8px"><span class="m">--This</span><i class="sp">·</i><span class="m">is</span><i class="sp">·</i><span class="m">the</span><i class="sp">·</i><span class="m">base</span><i class="sp">·</i><span class="m">code</span><i class="sp">·</i><span class="m">of</span><i class="sp">·</i><span class="m">ScreenA.LvglImg1_test</span></div>
<div class="num" style="top:471px">45</div>
<div class="cl" style="top:471px;left:977.8px"><span class="g">ScreenA</span><span class="o">.</span><span class="p">LvglImg1_test</span><span class="o">.</span><span class="p">self</span><i class="sp">·</i><span class="o">=</span><i class="sp">·</i><span class="g sq">lvgl</span><span class="o">.</span><span class="f">img_create</span><span class="y">(</span><span class="g">ScreenA</span><span class="o">.</span><span class="p">contFather_ScreenA</span><span class="o">,</span><i class="sp">·</i><span class="c">nil</span><span class="y">)</span><span class="wmsg"><b>未定义的全局变量</b> `lvgl`<b>。</b></span></div>
<div class="num" style="top:490px">46</div>
<div class="cl" style="top:490px;left:977.8px"><span class="g sq">lvgl</span><span class="o">.</span><span class="f">obj_set_click</span><span class="y">(</span><span class="g">ScreenA</span><span class="o">.</span><span class="p">LvglImg1_test</span><span class="o">.</span><span class="p">self</span><span class="o">,</span><i class="sp">·</i><span class="c">true</span><span class="y">)</span><span class="wmsg"><b>未定义的全局变量</b> `lvgl`<b>。</b></span></div>
<div class="num" style="top:509px">47</div>
<div class="cl" style="top:509px;left:977.8px"><span class="g sq">lvgl</span><span class="o">.</span><span class="f">obj_align</span><span class="y">(</span><span class="g">ScreenA</span><span class="o">.</span><span class="p">LvglImg1_test</span><span class="o">.</span><span class="p">self</span><span class="o">,</span><i class="sp">·</i><span class="g">ScreenA</span><span class="o">.</span><span class="p">contFather_ScreenA</span><span class="o">,</span><i class="sp">·</i><span class="g sq">lvgl</span><span class="o">.</span><span class="p">ALIGN_IN_TOP_LEFT</span><span class="o">,</span><i class="sp">·</i><span class="n">100</span><span class="o">,</span><i class="sp">·</i><span class="n">200</span><span class="y">)</span></div>
<div class="num" style="top:528px">48</div>
<div class="cl" style="top:528px;left:977.8px"><span class="g sq">lvgl</span><span class="o">.</span><span class="f">obj_add_style</span><span class="y">(</span><span class="g">ScreenA</span><span class="o">.</span><span class="p">LvglImg1_test</span><span class="o">.</span><span class="p">self</span><span class="o">,</span><i class="sp">·</i><span class="g sq">lvgl</span><span class="o">.</span><span class="p">IMG_PART_MAIN</span><span class="o">,</span><i class="sp">·</i><span class="g">Style_LvglImg1_test_1</span><span class="y">)</span><span class="wmsg"><b>未定义的全局变量</b> `lvgl`<b>。</b></span></div>
<div class="num" style="top:547px">49</div>
<div class="cl" style="top:547px;left:947.0px"><span class="k">end</span></div>
<div class="num" style="top:566px">50</div>
<div class="cl" style="top:566px;left:947.0px"><span class="g">ScreenA</span><span class="o">.</span><span class="f">free</span><i class="sp">·</i><span class="o">=</span><i class="sp">·</i><span class="k">function</span><span class="y">()</span></div>
<div class="num" style="top:585px">51</div>
<div class="cl" style="top:585px;left:977.8px"><span class="g sq">lvgl</span><span class="o">.</span><span class="f">obj_del</span><span class="y">(</span><span class="g">ScreenA</span><span class="o">.</span><span class="p">contFather_ScreenA</span><span class="y">)</span><span class="wmsg"><b>未定义的全局变量</b> `lvgl`<b>。</b></span></div>
<div class="num" style="top:604px">52</div>
<div class="cl" style="top:604px;left:977.8px"><span class="g">ScreenA</span><span class="o">.</span><span class="p">contFather_ScreenA</span><i class="sp">·</i><span class="o">=</span><i class="sp">·</i><span class="c">nil</span></div>
<div class="num" style="top:623px">53</div>
<div class="cl" style="top:623px;left:947.0px"><span class="k">end</span></div>
<div class="num" style="top:642px">54</div>
<div class="cl" style="top:642px;left:947.0px"></div>
<div class="num" style="top:661px">55</div>
<div class="cl" style="top:661px;left:947.0px"></div>
<div class="num" style="top:680px">56</div>
<div class="cl" style="top:680px;left:947.0px"><span class="m">----------------------------------------------------------------------------</span></div>
<div class="num" style="top:699px">57</div>
<div class="cl" style="top:699px;left:947.0px"><span class="m">-----------------------This</span><i class="sp">·</i><span class="m">is</span><i class="sp">·</i><span class="m">the</span><i class="sp">·</i><span class="m">Initial</span><i class="sp">·</i><span class="m">of</span><i class="sp">·</i><span class="m">lvglGUI-----------------------</span></div>
<div class="num" style="top:718px">58</div>
<div class="cl" style="top:718px;left:947.0px"><span class="m">----------------------------------------------------------------------------</span></div>
<div class="num" style="top:737px">59</div>
<div class="cl" style="top:737px;left:947.0px"><span class="k">function</span><i class="sp">·</i><span class="g sqb">lvglUiInitial</span><span class="y">()</span><span class="hmsg"><b>首字母小写的全局变量，你是否漏了</b> `local` <b>或是有拼写错误？</b></span></div>
<div class="num" style="top:756px">60</div>
<div class="cl" style="top:756px;left:977.8px"><span class="g">ScreenA</span><span class="o">.</span><span class="f">create</span><span class="y">()</span></div>
<div class="num" style="top:775px">61</div>
<div class="cl" style="top:775px;left:947.0px"><span class="k">end</span></div>
<div class="num" style="top:794px">62</div>
<div class="cl" style="top:794px;left:947.0px"></div></div></div>
<!-- minimap placeholder -->
<div id="mm" class="abs" style="left:1788px;top:85px;width:119px;height:747px;background:#1e1e1e;overflow:hidden"><svg class="abs" style="left:0;top:0;width:120px;height:140px" viewBox="0 0 120 140"><g shape-rendering="crispEdges"><rect x="8" y="70" width="111" height="2" fill="#7a6212"/><rect x="41" y="70" width="4" height="2" fill="#e8ba00"/><rect x="58" y="70" width="4" height="2" fill="#e8ba00"/><rect x="8" y="72" width="111" height="2" fill="#7a6212"/><rect x="12" y="72" width="4" height="2" fill="#e8ba00"/><rect x="8" y="74" width="111" height="2" fill="#7a6212"/><rect x="12" y="74" width="4" height="2" fill="#e8ba00"/><rect x="60" y="74" width="4" height="2" fill="#e8ba00"/><rect x="8" y="80" width="111" height="2" fill="#7a6212"/><rect x="34" y="80" width="4" height="2" fill="#e8ba00"/><rect x="8" y="82" width="111" height="2" fill="#7a6212"/><rect x="12" y="82" width="4" height="2" fill="#e8ba00"/><rect x="8" y="88" width="111" height="2" fill="#7a6212"/><rect x="41" y="88" width="4" height="2" fill="#e8ba00"/><rect x="8" y="90" width="111" height="2" fill="#7a6212"/><rect x="12" y="90" width="4" height="2" fill="#e8ba00"/><rect x="8" y="92" width="111" height="2" fill="#7a6212"/><rect x="12" y="92" width="4" height="2" fill="#e8ba00"/><rect x="83" y="92" width="4" height="2" fill="#e8ba00"/><rect x="8" y="94" width="111" height="2" fill="#7a6212"/><rect x="12" y="94" width="4" height="2" fill="#e8ba00"/><rect x="59" y="94" width="4" height="2" fill="#e8ba00"/><rect x="8" y="100" width="111" height="2" fill="#7a6212"/><rect x="12" y="100" width="4" height="2" fill="#e8ba00"/></g><g shape-rendering="crispEdges"><rect x="8" y="0" width="76" height="1" fill="#6a9955" opacity="0.34"/><rect x="8" y="2" width="2" height="1" fill="#6a9955" opacity="0.42"/><rect x="11" y="2" width="4" height="1" fill="#6a9955" opacity="0.42"/><rect x="16" y="2" width="4" height="1" fill="#6a9955" opacity="0.42"/><rect x="21" y="2" width="2" height="1" fill="#6a9955" opacity="0.42"/><rect x="24" y="2" width="13" height="1" fill="#6a9955" opacity="0.42"/><rect x="38" y="2" width="9" height="1" fill="#6a9955" opacity="0.42"/><rect x="48" y="2" width="2" height="1" fill="#6a9955" opacity="0.42"/><rect x="51" y="2" width="3" height="1" fill="#6a9955" opacity="0.42"/><rect x="55" y="2" width="7" height="1" fill="#6a9955" opacity="0.42"/><rect x="63" y="2" width="2" height="1" fill="#6a9955" opacity="0.42"/><rect x="66" y="2" width="8" height="1" fill="#6a9955" opacity="0.42"/><rect x="8" y="4" width="2" height="1" fill="#6a9955" opacity="0.42"/><rect x="11" y="4" width="2" height="1" fill="#6a9955" opacity="0.42"/><rect x="14" y="4" width="3" height="1" fill="#6a9955" opacity="0.42"/><rect x="18" y="4" width="4" height="1" fill="#6a9955" opacity="0.42"/><rect x="23" y="4" width="2" height="1" fill="#6a9955" opacity="0.42"/><rect x="26" y="4" width="2" height="1" fill="#6a9955" opacity="0.42"/><rect x="29" y="4" width="5" height="1" fill="#6a9955" opacity="0.42"/><rect x="35" y="4" width="13" height="1" fill="#6a9955" opacity="0.42"/><rect x="49" y="4" width="4" height="1" fill="#6a9955" opacity="0.42"/><rect x="54" y="4" width="2" height="1" fill="#6a9955" opacity="0.42"/><rect x="57" y="4" width="11" height="1" fill="#6a9955" opacity="0.42"/><rect x="8" y="6" width="76" height="1" fill="#6a9955" opacity="0.34"/><rect x="8" y="10" width="8" height="1" fill="#6a9955" opacity="0.42"/><rect x="17" y="10" width="5" height="1" fill="#6a9955" opacity="0.42"/><rect x="23" y="10" width="4" height="1" fill="#6a9955" opacity="0.42"/><rect x="8" y="12" width="7" height="1" fill="#dcdcaa" opacity="0.50"/><rect x="16" y="12" width="10" height="1" fill="#ce9178" opacity="0.50"/><rect x="8" y="16" width="5" height="1" fill="#569cd6" opacity="0.50"/><rect x="14" y="16" width="8" height="1" fill="#c586c0" opacity="0.50"/><rect x="23" y="16" width="12" height="1" fill="#dcdcaa" opacity="0.50"/><rect x="12" y="18" width="5" height="1" fill="#569cd6" opacity="0.50"/><rect x="18" y="18" width="1" height="1" fill="#d4d4d4" opacity="0.50"/><rect x="20" y="18" width="1" height="1" fill="#d4d4d4" opacity="0.50"/><rect x="22" y="18" width="2" height="1" fill="#d4d4d4" opacity="0.50"/><rect x="12" y="20" width="5" height="1" fill="#569cd6" opacity="0.50"/><rect x="18" y="20" width="5" height="1" fill="#4ec9b0" opacity="0.50"/><rect x="24" y="20" width="1" height="1" fill="#d4d4d4" opacity="0.50"/><rect x="26" y="20" width="2" height="1" fill="#d4d4d4" opacity="0.50"/><rect x="12" y="22" width="12" height="1" fill="#dcdcaa" opacity="0.50"/><rect x="24" y="22" width="3" height="1" fill="#d4d4d4" opacity="0.50"/><rect x="28" y="22" width="6" height="1" fill="#4ec9b0" opacity="0.50"/><rect x="12" y="24" width="5" height="1" fill="#4ec9b0" opacity="0.50"/><rect x="17" y="24" width="1" height="1" fill="#d4d4d4" opacity="0.50"/><rect x="18" y="24" width="7" height="1" fill="#4ec9b0" opacity="0.50"/><rect x="26" y="24" width="1" height="1" fill="#d4d4d4" opacity="0.50"/><rect x="28" y="24" width="5" height="1" fill="#4ec9b0" opacity="0.50"/><rect x="12" y="26" width="5" height="1" fill="#4ec9b0" opacity="0.50"/><rect x="17" y="26" width="1" height="1" fill="#d4d4d4" opacity="0.50"/><rect x="18" y="26" width="10" height="1" fill="#4ec9b0" opacity="0.50"/><rect x="29" y="26" width="1" height="1" fill="#d4d4d4" opacity="0.50"/><rect x="31" y="26" width="8" height="1" fill="#c586c0" opacity="0.50"/><rect x="39" y="26" width="3" height="1" fill="#d4d4d4" opacity="0.50"/><rect x="16" y="28" width="6" height="1" fill="#c586c0" opacity="0.50"/><rect x="23" y="28" width="2" height="1" fill="#d4d4d4" opacity="0.50"/><rect x="25" y="28" width="4" height="1" fill="#4ec9b0" opacity="0.50"/><rect x="12" y="30" width="3" height="1" fill="#c586c0" opacity="0.50"/><rect x="12" y="32" width="5" height="1" fill="#4ec9b0" opacity="0.50"/><rect x="17" y="32" width="1" height="1" fill="#d4d4d4" opacity="0.50"/><rect x="18" y="32" width="8" height="1" fill="#4ec9b0" opacity="0.50"/><rect x="27" y="32" width="1" height="1" fill="#d4d4d4" opacity="0.50"/><rect x="29" y="32" width="8" height="1" fill="#c586c0" opacity="0.50"/><rect x="37" y="32" width="3" height="1" fill="#d4d4d4" opacity="0.50"/><rect x="16" y="34" width="6" height="1" fill="#c586c0" opacity="0.50"/><rect x="23" y="34" width="2" height="1" fill="#d4d4d4" opacity="0.50"/><rect x="25" y="34" width="2" height="1" fill="#4ec9b0" opacity="0.50"/><rect x="12" y="36" width="3" height="1" fill="#c586c0" opacity="0.50"/><rect x="12" y="38" width="5" height="1" fill="#4ec9b0" opacity="0.50"/><rect x="17" y="38" width="1" height="1" fill="#d4d4d4" opacity="0.50"/><rect x="18" y="38" width="4" height="1" fill="#4ec9b0" opacity="0.50"/><rect x="23" y="38" width="1" height="1" fill="#d4d4d4" opacity="0.50"/><rect x="25" y="38" width="3" height="1" fill="#569cd6" opacity="0.50"/><rect x="12" y="40" width="5" height="1" fill="#4ec9b0" opacity="0.50"/><rect x="17" y="40" width="1" height="1" fill="#d4d4d4" opacity="0.50"/><rect x="18" y="40" width="2" height="1" fill="#4ec9b0" opacity="0.50"/><rect x="21" y="40" width="1" height="1" fill="#d4d4d4" opacity="0.50"/><rect x="23" y="40" width="8" height="1" fill="#c586c0" opacity="0.50"/><rect x="31" y="40" width="3" height="1" fill="#d4d4d4" opacity="0.50"/><rect x="35" y="40" width="3" height="1" fill="#c586c0" opacity="0.50"/><rect x="12" y="42" width="6" height="1" fill="#c586c0" opacity="0.50"/><rect x="19" y="42" width="1" height="1" fill="#d4d4d4" opacity="0.50"/><rect x="8" y="44" width="3" height="1" fill="#c586c0" opacity="0.50"/><rect x="8" y="48" width="7" height="1" fill="#7aa6d6" opacity="0.50"/><rect x="16" y="48" width="1" height="1" fill="#d4d4d4" opacity="0.50"/><rect x="8" y="50" width="1" height="1" fill="#dcdcaa" opacity="0.50"/><rect x="12" y="52" width="6" height="1" fill="#dcdcaa" opacity="0.50"/><rect x="19" y="52" width="1" height="1" fill="#d4d4d4" opacity="0.50"/><rect x="21" y="52" width="3" height="1" fill="#569cd6" opacity="0.50"/><rect x="24" y="52" width="1" height="1" fill="#d4d4d4" opacity="0.50"/><rect x="12" y="54" width="4" height="1" fill="#4ec9b0" opacity="0.50"/><rect x="17" y="54" width="1" height="1" fill="#d4d4d4" opacity="0.50"/><rect x="19" y="54" width="3" height="1" fill="#569cd6" opacity="0.50"/><rect x="22" y="54" width="1" height="1" fill="#d4d4d4" opacity="0.50"/><rect x="12" y="56" width="18" height="1" fill="#4ec9b0" opacity="0.50"/><rect x="31" y="56" width="1" height="1" fill="#d4d4d4" opacity="0.50"/><rect x="33" y="56" width="3" height="1" fill="#569cd6" opacity="0.50"/><rect x="36" y="56" width="1" height="1" fill="#d4d4d4" opacity="0.50"/><rect x="12" y="58" width="13" height="1" fill="#4ec9b0" opacity="0.50"/><rect x="26" y="58" width="1" height="1" fill="#d4d4d4" opacity="0.50"/><rect x="28" y="58" width="10" height="1" fill="#dcdcaa" opacity="0.50"/><rect x="38" y="58" width="2" height="1" fill="#ffd700" opacity="0.50"/><rect x="40" y="58" width="1" height="1" fill="#d4d4d4" opacity="0.50"/><rect x="8" y="60" width="1" height="1" fill="#dcdcaa" opacity="0.50"/><rect x="8" y="62" width="76" height="1" fill="#6a9955" opacity="0.34"/><rect x="8" y="64" width="5" height="1" fill="#6a9955" opacity="0.42"/><rect x="14" y="64" width="9" height="1" fill="#6a9955" opacity="0.42"/><rect x="24" y="64" width="2" height="1" fill="#6a9955" opacity="0.42"/><rect x="27" y="64" width="3" height="1" fill="#6a9955" opacity="0.42"/><rect x="31" y="64" width="7" height="1" fill="#6a9955" opacity="0.42"/><rect x="39" y="64" width="2" height="1" fill="#6a9955" opacity="0.42"/><rect x="42" y="64" width="7" height="1" fill="#6a9955" opacity="0.42"/><rect x="50" y="64" width="7" height="1" fill="#6a9955" opacity="0.42"/><rect x="8" y="66" width="75" height="1" fill="#6a9955" opacity="0.34"/><rect x="8" y="68" width="7" height="1" fill="#7aa6d6" opacity="0.50"/><rect x="15" y="68" width="1" height="1" fill="#d4d4d4" opacity="0.50"/><rect x="16" y="68" width="6" height="1" fill="#dcdcaa" opacity="0.50"/><rect x="23" y="68" width="1" height="1" fill="#d4d4d4" opacity="0.50"/><rect x="25" y="68" width="8" height="1" fill="#c586c0" opacity="0.50"/><rect x="33" y="68" width="2" height="1" fill="#ffd700" opacity="0.50"/><rect x="12" y="70" width="7" height="1" fill="#7aa6d6" opacity="0.30"/><rect x="19" y="70" width="1" height="1" fill="#d4d4d4" opacity="0.30"/><rect x="20" y="70" width="18" height="1" fill="#4ec9b0" opacity="0.30"/><rect x="39" y="70" width="1" height="1" fill="#d4d4d4" opacity="0.30"/><rect x="45" y="70" width="1" height="1" fill="#d4d4d4" opacity="0.30"/><rect x="46" y="70" width="11" height="1" fill="#dcdcaa" opacity="0.30"/><rect x="57" y="70" width="1" height="1" fill="#ffd700" opacity="0.30"/><rect x="62" y="70" width="1" height="1" fill="#d4d4d4" opacity="0.30"/><rect x="63" y="70" width="7" height="1" fill="#dcdcaa" opacity="0.30"/><rect x="70" y="70" width="2" height="1" fill="#da70d6" opacity="0.30"/><rect x="72" y="70" width="1" height="1" fill="#d4d4d4" opacity="0.30"/><rect x="74" y="70" width="3" height="1" fill="#569cd6" opacity="0.30"/><rect x="77" y="70" width="1" height="1" fill="#ffd700" opacity="0.30"/><rect x="82" y="70" width="14" height="1" fill="#e8c060" opacity=".3"/><rect x="16" y="72" width="1" height="1" fill="#d4d4d4" opacity="0.30"/><rect x="17" y="72" width="12" height="1" fill="#dcdcaa" opacity="0.30"/><rect x="29" y="72" width="1" height="1" fill="#ffd700" opacity="0.30"/><rect x="30" y="72" width="7" height="1" fill="#7aa6d6" opacity="0.30"/><rect x="37" y="72" width="1" height="1" fill="#d4d4d4" opacity="0.30"/><rect x="38" y="72" width="18" height="1" fill="#4ec9b0" opacity="0.30"/><rect x="56" y="72" width="1" height="1" fill="#d4d4d4" opacity="0.30"/><rect x="58" y="72" width="3" height="1" fill="#b5cea8" opacity="0.30"/><rect x="61" y="72" width="1" height="1" fill="#d4d4d4" opacity="0.30"/><rect x="63" y="72" width="3" height="1" fill="#b5cea8" opacity="0.30"/><rect x="66" y="72" width="1" height="1" fill="#ffd700" opacity="0.30"/><rect x="71" y="72" width="14" height="1" fill="#e8c060" opacity=".3"/><rect x="16" y="74" width="1" height="1" fill="#d4d4d4" opacity="0.30"/><rect x="17" y="74" width="9" height="1" fill="#dcdcaa" opacity="0.30"/><rect x="26" y="74" width="1" height="1" fill="#ffd700" opacity="0.30"/><rect x="27" y="74" width="7" height="1" fill="#7aa6d6" opacity="0.30"/><rect x="34" y="74" width="1" height="1" fill="#d4d4d4" opacity="0.30"/><rect x="35" y="74" width="18" height="1" fill="#4ec9b0" opacity="0.30"/><rect x="53" y="74" width="1" height="1" fill="#d4d4d4" opacity="0.30"/><rect x="55" y="74" width="3" height="1" fill="#569cd6" opacity="0.30"/><rect x="58" y="74" width="1" height="1" fill="#d4d4d4" opacity="0.30"/><rect x="64" y="74" width="1" height="1" fill="#d4d4d4" opacity="0.30"/><rect x="65" y="74" width="17" height="1" fill="#4ec9b0" opacity="0.30"/><rect x="82" y="74" width="1" height="1" fill="#d4d4d4" opacity="0.30"/><rect x="84" y="74" width="1" height="1" fill="#b5cea8" opacity="0.30"/><rect x="85" y="74" width="1" height="1" fill="#d4d4d4" opacity="0.30"/><rect x="87" y="74" width="1" height="1" fill="#b5cea8" opacity="0.30"/><rect x="88" y="74" width="1" height="1" fill="#ffd700" opacity="0.30"/><rect x="93" y="74" width="14" height="1" fill="#e8c060" opacity=".3"/><rect x="12" y="78" width="6" height="1" fill="#6a9955" opacity="0.42"/><rect x="19" y="78" width="2" height="1" fill="#6a9955" opacity="0.42"/><rect x="22" y="78" width="3" height="1" fill="#6a9955" opacity="0.42"/><rect x="26" y="78" width="15" height="1" fill="#6a9955" opacity="0.42"/><rect x="42" y="78" width="5" height="1" fill="#6a9955" opacity="0.42"/><rect x="48" y="78" width="2" height="1" fill="#6a9955" opacity="0.42"/><rect x="51" y="78" width="21" height="1" fill="#6a9955" opacity="0.42"/><rect x="12" y="80" width="21" height="1" fill="#7aa6d6" opacity="0.30"/><rect x="33" y="80" width="1" height="1" fill="#d4d4d4" opacity="0.30"/><rect x="38" y="80" width="1" height="1" fill="#d4d4d4" opacity="0.30"/><rect x="39" y="80" width="7" height="1" fill="#dcdcaa" opacity="0.30"/><rect x="46" y="80" width="2" height="1" fill="#ffd700" opacity="0.30"/><rect x="52" y="80" width="14" height="1" fill="#e8c060" opacity=".3"/><rect x="16" y="82" width="1" height="1" fill="#d4d4d4" opacity="0.30"/><rect x="17" y="82" width="10" height="1" fill="#dcdcaa" opacity="0.30"/><rect x="27" y="82" width="1" height="1" fill="#ffd700" opacity="0.30"/><rect x="28" y="82" width="21" height="1" fill="#7aa6d6" opacity="0.30"/><rect x="49" y="82" width="1" height="1" fill="#ffd700" opacity="0.30"/><rect x="54" y="82" width="14" height="1" fill="#e8c060" opacity=".3"/><rect x="12" y="86" width="6" height="1" fill="#6a9955" opacity="0.42"/><rect x="19" y="86" width="2" height="1" fill="#6a9955" opacity="0.42"/><rect x="22" y="86" width="3" height="1" fill="#6a9955" opacity="0.42"/><rect x="26" y="86" width="4" height="1" fill="#6a9955" opacity="0.42"/><rect x="31" y="86" width="4" height="1" fill="#6a9955" opacity="0.42"/><rect x="36" y="86" width="2" height="1" fill="#6a9955" opacity="0.42"/><rect x="39" y="86" width="21" height="1" fill="#6a9955" opacity="0.42"/><rect x="12" y="88" width="7" height="1" fill="#7aa6d6" opacity="0.30"/><rect x="19" y="88" width="1" height="1" fill="#d4d4d4" opacity="0.30"/><rect x="20" y="88" width="13" height="1" fill="#4ec9b0" opacity="0.30"/><rect x="33" y="88" width="1" height="1" fill="#d4d4d4" opacity="0.30"/><rect x="34" y="88" width="4" height="1" fill="#4ec9b0" opacity="0.30"/><rect x="39" y="88" width="1" height="1" fill="#d4d4d4" opacity="0.30"/><rect x="45" y="88" width="1" height="1" fill="#d4d4d4" opacity="0.30"/><rect x="46" y="88" width="10" height="1" fill="#dcdcaa" opacity="0.30"/><rect x="56" y="88" width="1" height="1" fill="#ffd700" opacity="0.30"/><rect x="57" y="88" width="7" height="1" fill="#7aa6d6" opacity="0.30"/><rect x="64" y="88" width="1" height="1" fill="#d4d4d4" opacity="0.30"/><rect x="65" y="88" width="18" height="1" fill="#4ec9b0" opacity="0.30"/><rect x="83" y="88" width="1" height="1" fill="#d4d4d4" opacity="0.30"/><rect x="85" y="88" width="3" height="1" fill="#569cd6" opacity="0.30"/><rect x="88" y="88" width="1" height="1" fill="#ffd700" opacity="0.30"/><rect x="93" y="88" width="14" height="1" fill="#e8c060" opacity=".3"/><rect x="16" y="90" width="1" height="1" fill="#d4d4d4" opacity="0.30"/><rect x="17" y="90" width="13" height="1" fill="#dcdcaa" opacity="0.30"/><rect x="30" y="90" width="1" height="1" fill="#ffd700" opacity="0.30"/><rect x="31" y="90" width="7" height="1" fill="#7aa6d6" opacity="0.30"/><rect x="38" y="90" width="1" height="1" fill="#d4d4d4" opacity="0.30"/><rect x="39" y="90" width="13" height="1" fill="#4ec9b0" opacity="0.30"/><rect x="52" y="90" width="1" height="1" fill="#d4d4d4" opacity="0.30"/><rect x="53" y="90" width="4" height="1" fill="#4ec9b0" opacity="0.30"/><rect x="57" y="90" width="1" height="1" fill="#d4d4d4" opacity="0.30"/><rect x="59" y="90" width="4" height="1" fill="#569cd6" opacity="0.30"/><rect x="63" y="90" width="1" height="1" fill="#ffd700" opacity="0.30"/><rect x="68" y="90" width="14" height="1" fill="#e8c060" opacity=".3"/><rect x="16" y="92" width="1" height="1" fill="#d4d4d4" opacity="0.30"/><rect x="17" y="92" width="9" height="1" fill="#dcdcaa" opacity="0.30"/><rect x="26" y="92" width="1" height="1" fill="#ffd700" opacity="0.30"/><rect x="27" y="92" width="7" height="1" fill="#7aa6d6" opacity="0.30"/><rect x="34" y="92" width="1" height="1" fill="#d4d4d4" opacity="0.30"/><rect x="35" y="92" width="13" height="1" fill="#4ec9b0" opacity="0.30"/><rect x="48" y="92" width="1" height="1" fill="#d4d4d4" opacity="0.30"/><rect x="49" y="92" width="4" height="1" fill="#4ec9b0" opacity="0.30"/><rect x="53" y="92" width="1" height="1" fill="#d4d4d4" opacity="0.30"/><rect x="55" y="92" width="7" height="1" fill="#7aa6d6" opacity="0.30"/><rect x="62" y="92" width="1" height="1" fill="#d4d4d4" opacity="0.30"/><rect x="63" y="92" width="18" height="1" fill="#4ec9b0" opacity="0.30"/><rect x="81" y="92" width="1" height="1" fill="#d4d4d4" opacity="0.30"/><rect x="87" y="92" width="1" height="1" fill="#d4d4d4" opacity="0.30"/><rect x="88" y="92" width="17" height="1" fill="#4ec9b0" opacity="0.30"/><rect x="105" y="92" width="1" height="1" fill="#d4d4d4" opacity="0.30"/><rect x="107" y="92" width="3" height="1" fill="#b5cea8" opacity="0.30"/><rect x="110" y="92" width="1" height="1" fill="#d4d4d4" opacity="0.30"/><rect x="112" y="92" width="3" height="1" fill="#b5cea8" opacity="0.30"/><rect x="115" y="92" width="1" height="1" fill="#ffd700" opacity="0.30"/><rect x="16" y="94" width="1" height="1" fill="#d4d4d4" opacity="0.30"/><rect x="17" y="94" width="13" height="1" fill="#dcdcaa" opacity="0.30"/><rect x="30" y="94" width="1" height="1" fill="#ffd700" opacity="0.30"/><rect x="31" y="94" width="7" height="1" fill="#7aa6d6" opacity="0.30"/><rect x="38" y="94" width="1" height="1" fill="#d4d4d4" opacity="0.30"/><rect x="39" y="94" width="13" height="1" fill="#4ec9b0" opacity="0.30"/><rect x="52" y="94" width="1" height="1" fill="#d4d4d4" opacity="0.30"/><rect x="53" y="94" width="4" height="1" fill="#4ec9b0" opacity="0.30"/><rect x="57" y="94" width="1" height="1" fill="#d4d4d4" opacity="0.30"/><rect x="63" y="94" width="1" height="1" fill="#d4d4d4" opacity="0.30"/><rect x="64" y="94" width="13" height="1" fill="#4ec9b0" opacity="0.30"/><rect x="77" y="94" width="1" height="1" fill="#d4d4d4" opacity="0.30"/><rect x="79" y="94" width="21" height="1" fill="#7aa6d6" opacity="0.30"/><rect x="100" y="94" width="1" height="1" fill="#ffd700" opacity="0.30"/><rect x="105" y="94" width="14" height="1" fill="#e8c060" opacity=".3"/><rect x="8" y="96" width="3" height="1" fill="#c586c0" opacity="0.50"/><rect x="8" y="98" width="7" height="1" fill="#7aa6d6" opacity="0.50"/><rect x="15" y="98" width="1" height="1" fill="#d4d4d4" opacity="0.50"/><rect x="16" y="98" width="4" height="1" fill="#dcdcaa" opacity="0.50"/><rect x="21" y="98" width="1" height="1" fill="#d4d4d4" opacity="0.50"/><rect x="23" y="98" width="8" height="1" fill="#c586c0" opacity="0.50"/><rect x="31" y="98" width="2" height="1" fill="#ffd700" opacity="0.50"/><rect x="16" y="100" width="1" height="1" fill="#d4d4d4" opacity="0.30"/><rect x="17" y="100" width="7" height="1" fill="#dcdcaa" opacity="0.30"/><rect x="24" y="100" width="1" height="1" fill="#ffd700" opacity="0.30"/><rect x="25" y="100" width="7" height="1" fill="#7aa6d6" opacity="0.30"/><rect x="32" y="100" width="1" height="1" fill="#d4d4d4" opacity="0.30"/><rect x="33" y="100" width="18" height="1" fill="#4ec9b0" opacity="0.30"/><rect x="51" y="100" width="1" height="1" fill="#ffd700" opacity="0.30"/><rect x="56" y="100" width="14" height="1" fill="#e8c060" opacity=".3"/><rect x="12" y="102" width="7" height="1" fill="#7aa6d6" opacity="0.50"/><rect x="19" y="102" width="1" height="1" fill="#d4d4d4" opacity="0.50"/><rect x="20" y="102" width="18" height="1" fill="#4ec9b0" opacity="0.50"/><rect x="39" y="102" width="1" height="1" fill="#d4d4d4" opacity="0.50"/><rect x="41" y="102" width="3" height="1" fill="#569cd6" opacity="0.50"/><rect x="8" y="104" width="3" height="1" fill="#c586c0" opacity="0.50"/><rect x="8" y="110" width="76" height="1" fill="#6a9955" opacity="0.34"/><rect x="8" y="112" width="27" height="1" fill="#6a9955" opacity="0.34"/><rect x="36" y="112" width="2" height="1" fill="#6a9955" opacity="0.34"/><rect x="39" y="112" width="3" height="1" fill="#6a9955" opacity="0.34"/><rect x="43" y="112" width="7" height="1" fill="#6a9955" opacity="0.34"/><rect x="51" y="112" width="2" height="1" fill="#6a9955" opacity="0.34"/><rect x="54" y="112" width="30" height="1" fill="#6a9955" opacity="0.34"/><rect x="8" y="114" width="76" height="1" fill="#6a9955" opacity="0.34"/><rect x="8" y="116" width="8" height="1" fill="#c586c0" opacity="0.50"/><rect x="17" y="116" width="13" height="1" fill="#f2a33c" opacity="0.50"/><rect x="30" y="116" width="2" height="1" fill="#ffd700" opacity="0.50"/><rect x="12" y="118" width="7" height="1" fill="#7aa6d6" opacity="0.50"/><rect x="19" y="118" width="1" height="1" fill="#d4d4d4" opacity="0.50"/><rect x="20" y="118" width="6" height="1" fill="#dcdcaa" opacity="0.50"/><rect x="26" y="118" width="2" height="1" fill="#ffd700" opacity="0.50"/><rect x="8" y="120" width="3" height="1" fill="#c586c0" opacity="0.50"/></g></svg></div>
<div class="abs" style="left:1906px;top:85px;width:1px;height:747px;background:#3e3e3e"></div>
<div class="abs" style="left:1782px;top:85px;width:6px;height:747px;background:linear-gradient(90deg,rgba(0,0,0,0),rgba(0,0,0,.42))"></div>
<!-- annotations -->
<div class="ann" style="left:274px;top:187.500px;font-size:27.300px;line-height:40px;letter-spacing:-.6px">X轴坐标为100，Y轴坐标为200</div>
<svg class="abs" style="left:0;top:0;width:1907px;height:832px;pointer-events:none" viewBox="0 0 1907 832"><path d="M385.700 234.800L358.200 247.300L356.600 244.300L348.600 256.400L363 254.800L360.800 251.500Z" fill="#ea1c2c" stroke="#ea1c2c" stroke-width=".5" stroke-linejoin="round"/><circle cx="345.300" cy="266.400" r="5.800" fill="none" stroke="#e8101c" stroke-width="1.900"/><rect x="344.400" y="265.500" width="1.800" height="1.800" fill="#e8101c"/></svg>
<div class="abs" style="left:673px;top:379px;width:190px;height:117px;border:2px solid #ea1c2c"></div>
<div class="ann" style="left:780px;top:553px;font-size:27.300px;line-height:40px;letter-spacing:-.6px">对应代码</div>
<svg class="abs" style="left:0;top:0;width:1907px;height:832px;pointer-events:none" viewBox="0 0 1907 832"><path d="M865 548.500L927 523.400L924.100 520.100L937.900 521L928.300 530.900L928.200 526.600L865.400 549.500Z" fill="#ea1c2c" stroke="#ea1c2c" stroke-width=".5" stroke-linejoin="round"/></svg>
<div class="abs" style="left:965px;top:510px;width:816px;height:20px;border:2px solid #ea1c2c"></div>

<div class="abs" style="left:881px;top:85px;width:907px;height:4px;background:linear-gradient(180deg,rgba(0,0,0,.55),rgba(0,0,0,0))"></div>

</body></html>
